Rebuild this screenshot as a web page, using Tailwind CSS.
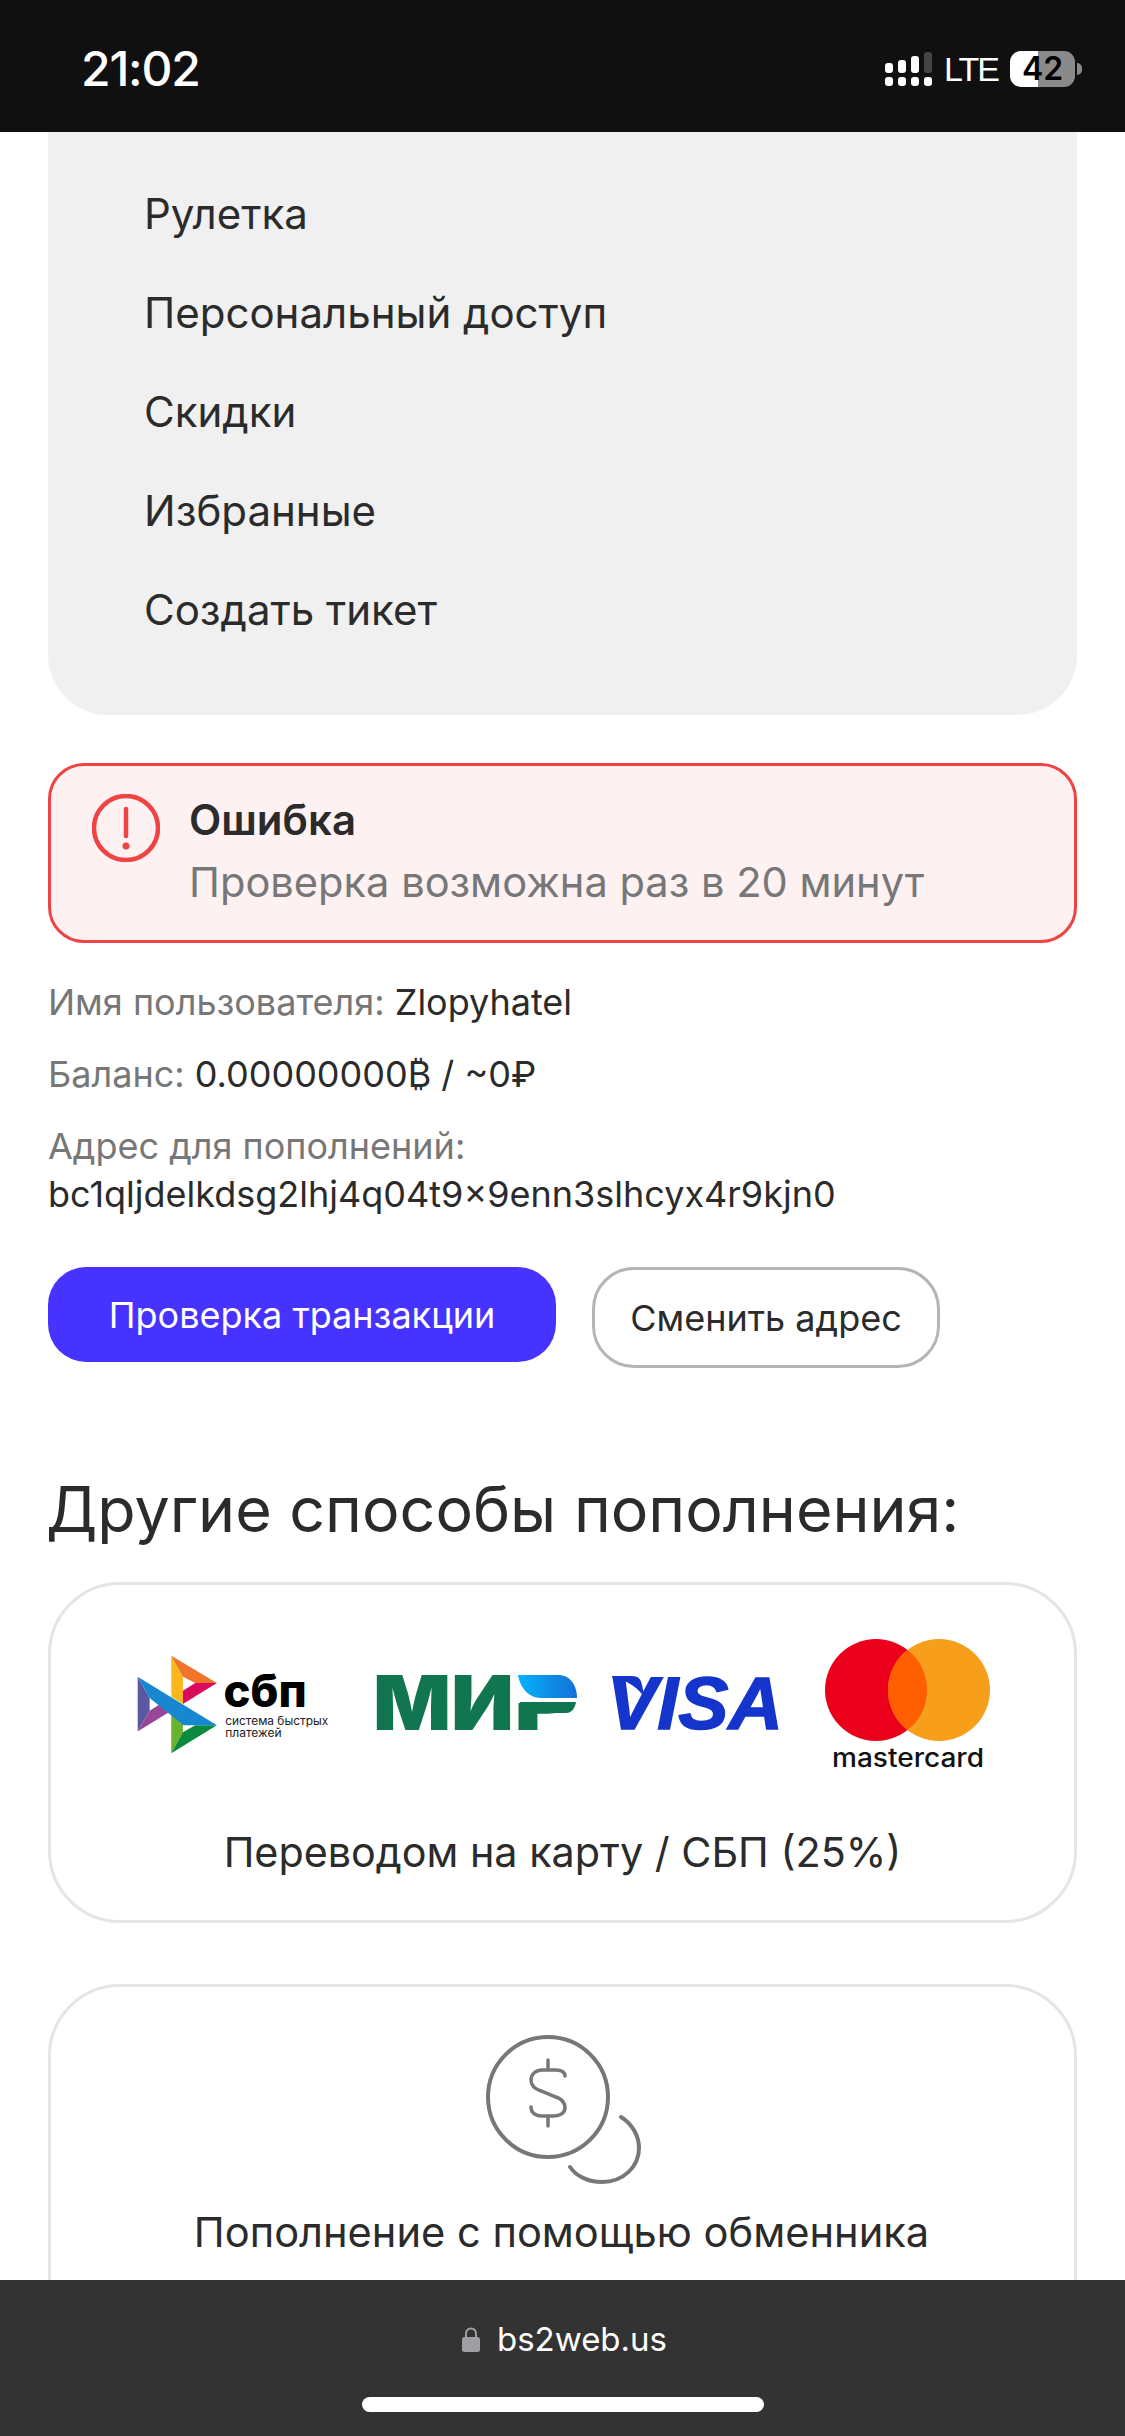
<!DOCTYPE html>
<html lang="ru">

<head>
    <meta charset="UTF-8">
    <meta name="viewport" content="width=device-width, initial-scale=1.0">
    <title>bs2web.us</title>
    <script src="https://cdn.jsdelivr.net/npm/@tailwindcss/browser@4"></script>
</head>

<body class="bg-white [font-family:Inter,sans-serif]">
    <div class="w-[1125px] h-[2436px] flex flex-col overflow-hidden text-[#2b2b2b]">

        <!-- status bar -->
        <div class="h-[132px] shrink-0 bg-[#101010] flex items-center justify-between pl-[81px] pr-[43px] pt-[6px]">
            <span class="text-white text-[48px] font-medium tracking-[-1.2px] leading-none">21:02</span>
            <div class="flex items-center">
                <svg width="48" height="36" viewBox="0 0 48 36" fill="#fff">
                    <rect x="0" y="26" width="8" height="9" rx="3"/><rect x="13" y="26" width="8" height="9" rx="3"/><rect x="26" y="26" width="8" height="9" rx="3"/><rect x="39" y="26" width="8" height="9" rx="3"/>
                    <rect x="0" y="12" width="8" height="10" rx="3"/><rect x="13" y="9" width="8" height="13" rx="3"/><rect x="26" y="5" width="8" height="17" rx="3"/><rect x="39" y="1" width="8" height="21" rx="3" fill="#444"/>
                </svg>
                <span class="ml-[11px] text-white text-[34px] font-medium leading-none w-[52px] [font-family:'Liberation_Sans',sans-serif] tracking-[-2px]">LTE</span>
                <div class="ml-[14px] w-[65px] h-[36px] flex relative">
                    <div class="w-[28px] bg-white rounded-l-[11px]"></div>
                    <div class="flex-1 bg-[#8a8a8a] rounded-r-[11px]"></div>
                    <span class="absolute inset-0 flex items-center justify-center text-black text-[32px] font-semibold leading-none">42</span>
                </div>
                <div class="ml-[2px] w-[5px] h-[12px] rounded-r-full bg-[#8a8a8a]"></div>
            </div>
        </div>

        <!-- page -->
        <div class="flex-1 overflow-hidden px-[48px]">
            <div class="bg-[#f0f0f0] rounded-b-[60px] pt-[32px] pb-[56px] pl-[96px] text-[42px]">
                <div class="h-[99px] flex items-center">Рулетка</div>
                <div class="h-[99px] flex items-center">Персональный доступ</div>
                <div class="h-[99px] flex items-center">Скидки</div>
                <div class="h-[99px] flex items-center">Избранные</div>
                <div class="h-[99px] flex items-center">Создать тикет</div>
            </div>

            <div class="mt-[48px] h-[180px] border-[3px] border-[#ef4444] bg-[#fef1f1] rounded-[36px] flex pl-[41px] pt-[28px]">
                <svg width="68" height="68" viewBox="0 0 68 68" fill="none" class="shrink-0">
                    <circle cx="34" cy="34" r="32" stroke="#ef4444" stroke-width="4.5"/>
                    <path d="M34 15V42" stroke="#ef4444" stroke-width="4.5" stroke-linecap="round"/>
                    <circle cx="34" cy="52" r="3.5" fill="#ef4444"/>
                </svg>
                <div class="ml-[29px]">
                    <div class="text-[42px] font-semibold leading-[48px] mt-[2px]">Ошибка</div>
                    <div class="text-[41.6px] text-[#777] leading-[50px] mt-[13px]">Проверка возможна раз в 20 минут</div>
                </div>
            </div>

            <div class="mt-[35px] text-[36px] leading-[48px]">
                <div><span class="text-[#777]">Имя пользователя:</span> Zlopyhatel</div>
                <div class="mt-[24px]"><span class="text-[#777]">Баланс:</span> 0.00000000₿ / ~0₽</div>
                <div class="mt-[24px] text-[#777]">Адрес для пополнений:</div>
                <div>bc1qljdelkdsg2lhj4q04t9x9enn3slhcyx4r9kjn0</div>
            </div>

            <div class="mt-[49px] flex items-start gap-[36px] text-[36px]">
                <div class="w-[508px] h-[95px] rounded-[38px] bg-[#4733ff] text-white flex items-center justify-center">Проверка транзакции</div>
                <div class="w-[348px] h-[101px] rounded-[42px] border-[3px] border-[#b5b5b5] flex items-center justify-center">Сменить адрес</div>
            </div>

            <div class="mt-[103px] -ml-[2px] text-[62.7px] leading-[76px]">Другие способы пополнения:</div>

            <!-- cards -->
            <div class="mt-[35px] h-[341px] border-[3px] border-[#e5e5e5] rounded-[72px] flex flex-col">
                <div class="flex items-start pl-[86px] pt-[53px]">
                    <svg width="193" height="100" viewBox="110 130 580 300" class="mt-[16px]">
                        <polygon points="112,198 148,262 148,300 112,363" fill="#5b57a2"/>
                        <polygon points="112,363 213,300 213,258 148,300" fill="#97479a"/>
                        <polygon points="213,135 248,198 248,280 213,258" fill="#fbb81c"/>
                        <polygon points="213,135 350,217 285,217 248,198" fill="#f0752a"/>
                        <polygon points="350,217 248,280 248,240 285,217" fill="#dc0a5e"/>
                        <polygon points="213,305 248,325 248,365 213,428" fill="#68b42e"/>
                        <polygon points="213,428 350,344 285,344 248,365" fill="#0b8a3d"/>
                        <polygon points="112,198 350,344 250,344 148,262" fill="#1788cf"/>
                        <text x="370" y="290" font-size="136" font-weight="800" fill="#000" textLength="250" lengthAdjust="spacingAndGlyphs">сбп</text>
                        <text x="375" y="343" font-size="34" fill="#222" textLength="310" lengthAdjust="spacingAndGlyphs">система быстрых</text>
                        <text x="375" y="380" font-size="34" fill="#222" textLength="170" lengthAdjust="spacingAndGlyphs">платежей</text>
                    </svg>
                    <svg width="204" height="110" viewBox="373 1646 204 110" class="ml-[43px] mt-[7px]">
                        <defs>
                            <linearGradient id="mirBlue" x1="0" y1="0" x2="1" y2="0">
                                <stop offset="0" stop-color="#05b2fb"/>
                                <stop offset="1" stop-color="#1470d8"/>
                            </linearGradient>
                        </defs>
                        <text x="373" y="1731" font-size="76" font-weight="900" fill="#117650" textLength="141" lengthAdjust="spacingAndGlyphs">МИ</text>
                        <text x="514" y="1731" font-size="76" font-weight="900" fill="#117650" textLength="63" lengthAdjust="spacingAndGlyphs">Р</text>
                        <rect x="516" y="1676" width="62" height="28" fill="#fff"/>
                        <path d="M518 1676H558C570 1676 577 1686 577 1699H541C528 1699 520 1688 518 1676Z" fill="url(#mirBlue)"/>
                        <path d="M520 1703H576C575 1709 572 1714 566 1714H538V1707H520Z" fill="#117650"/>
                    </svg>
                    <svg width="190" height="110" viewBox="600 1646 190 110" class="ml-[23px] mt-[7px]">
                        <text x="607" y="1730" font-size="75" font-weight="700" font-style="italic" font-family="Liberation Sans" fill="#1434cb" stroke="#1434cb" stroke-width="1.5" textLength="176" lengthAdjust="spacingAndGlyphs">VISA</text>
                        <path d="M612 1677H632C638 1677 641 1680 642 1686L645 1700C640 1690 628 1681 612 1678Z" fill="#1434cb"/>
                    </svg>
                    <svg width="166" height="134" viewBox="824 1638 166 134" class="ml-[34px]">
                        <circle cx="876" cy="1690" r="51" fill="#eb001b"/>
                        <circle cx="939" cy="1690" r="51" fill="#f79e1b"/>
                        <path d="M907.5 1650C920 1659 927 1674 927 1690C927 1706 920 1721 907.5 1730C895 1721 888 1706 888 1690C888 1674 895 1659 907.5 1650Z" fill="#ff5f00"/>
                        <text x="832" y="1767" font-size="26" font-weight="500" fill="#111" textLength="152" lengthAdjust="spacingAndGlyphs">mastercard</text>
                    </svg>
                </div>
                <div class="mt-[55px] text-center text-[41.3px] leading-[50px]">Переводом на карту / СБП (25%)</div>
            </div>

            <div class="mt-[61px] h-[400px] border-[3px] border-[#e5e5e5] rounded-[72px] flex flex-col items-center">
                <svg width="166" height="160" viewBox="0 0 166 160" fill="none" stroke="#777" stroke-linecap="round" class="mt-[46px] ml-[12px]">
                    <circle cx="62" cy="64" r="60" stroke-width="4"/>
                    <path d="M135 84C148 92 153 105 153 115C153 134 137 149 116 149C102 149 90 143 84 134" stroke-width="4"/>
                    <path d="M62 27V37M62 83V93M79 43C79 38 73 37 69 37H56C49 37 45 42 45 47C45 53 49 56 55 58L70 64C76 66 79 69 79 75C79 80 74 83 68 83H56C50 83 45 80 45 74" stroke-width="3.5"/>
                </svg>
                <div class="mt-[14px] -ml-[2px] text-[41.6px] leading-[50px]">Пополнение с помощью обменника</div>
            </div>
        </div>

        <!-- safari address bar -->
        <div class="h-[156px] shrink-0 bg-[#333333] flex flex-col items-center">
            <div class="mt-[42px] pl-[4px] flex items-center gap-[17px] h-[34px]">
                <svg width="18" height="25" viewBox="0 0 18 25" fill="none">
                    <path d="M4 11V7C4 3.5 6 1.5 9 1.5C12 1.5 14 3.5 14 7V11" stroke="#9e9ea3" stroke-width="2"/>
                    <rect x="0" y="10" width="18" height="15" rx="2.5" fill="#9e9ea3"/>
                </svg>
                <span class="text-white text-[33px] leading-none">bs2web.us</span>
            </div>
            <div class="mt-[41px] w-[402px] h-[15px] rounded-full bg-white"></div>
        </div>
    </div>
</body>

</html>
